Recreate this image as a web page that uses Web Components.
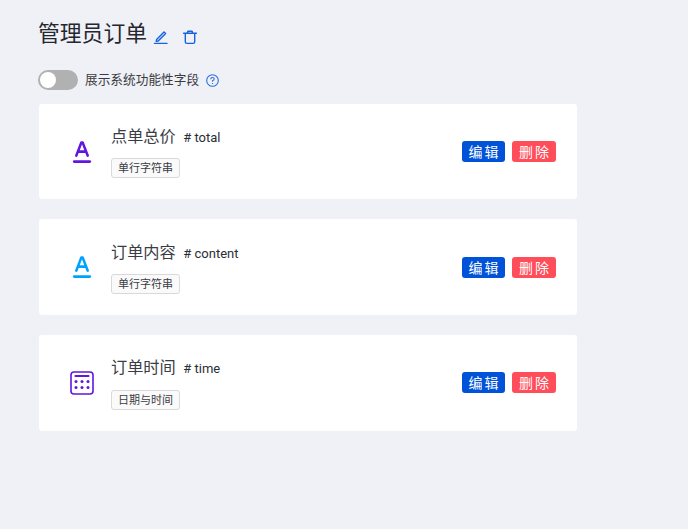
<!DOCTYPE html>
<html lang="zh"><head><meta charset="utf-8"><style>
html,body{margin:0;padding:0;background:#f0f1f6;height:100%}
body{font-family:"Noto Sans","Noto Sans CJK SC",sans-serif;color:#25272e}
</style></head><body>
<template id="app-tpl"><style>
:host{display:block;box-sizing:border-box;width:688px;height:529px;padding:17px 0 0 38px;overflow:hidden}
.list{display:flex;flex-direction:column;gap:20px;margin-left:1px;width:538px}
</style><page-header></page-header><sys-toggle></sys-toggle><div class="list"><slot></slot></div></template>

<template id="hdr-tpl"><style>
:host{display:flex;align-items:center;height:30px}
h1{margin:0;padding-top:2px;font-weight:400;font-size:21.8px;line-height:28px;color:#25272e}
svg{display:block;width:16px;height:16px;fill:none;stroke:#1463e0;stroke-width:1.4;stroke-linecap:round;stroke-linejoin:round}
.e{margin:9px 0 0 6px}.d{margin:9px 0 0 13px}
</style><h1>管理员订单</h1>
<svg class="e" viewBox="0 0 16 16"><path d="M3.6 10.4 L3.2 12.4 L5.2 12 L12.6 4.6 L11 3 Z M1.5 14.4 H14"/></svg>
<svg class="d" viewBox="0 0 16 16"><path d="M3.3 4.4 V12.8 Q3.3 14.4 4.9 14.4 H11.1 Q12.7 14.4 12.7 12.8 V4.4 M1.6 4.2 H14.4 M5.4 4 L5.9 2.2 H10.1 L10.6 4"/></svg></template>

<template id="tog-tpl"><style>
:host{display:flex;align-items:center;height:20px;margin:23px 0 13.8px}
.sw{width:40px;height:20px;border-radius:10px;background:#b1b1b1;position:relative;flex:none}
.sw i{position:absolute;left:2px;top:2px;width:16px;height:16px;border-radius:50%;background:#fff}
span{font-size:12.7px;margin:-2px 0 0 7px;color:#3a3c44;line-height:20px}
svg{width:13px;height:13px;margin-left:7px;display:block;fill:none;stroke:#2a70e0;stroke-width:1.1}
</style><div class="sw"><i></i></div><span>展示系统功能性字段</span>
<svg viewBox="0 0 13 13"><circle cx="6.5" cy="6.5" r="5.8"/><path d="M4.8 5.2 Q4.8 3.5 6.5 3.5 Q8.2 3.5 8.2 5 Q8.2 6 6.5 6.8 V7.8 M6.5 9 V10"/></svg></template>

<template id="card-tpl"><style>
:host{display:flex;align-items:center;box-sizing:border-box;background:#fff;border-radius:3px;height:95.6px;padding-left:30px;padding-right:21px}
.icon{width:26px;height:26px;flex:none;display:flex}
.main{margin-left:16px;flex:1;display:flex;flex-direction:column;align-items:flex-start}
.t{display:flex;align-items:baseline;height:24px;line-height:24px;transform:translateY(-1px)}
.n{font-size:16.2px;color:#3b3d45}
.k{font-family:Roboto,"Noto Sans",sans-serif;font-size:13px;margin-left:7.5px;color:#2b2d35}
.tag{margin-top:var(--tag-gap,9.1px);box-sizing:border-box;height:20px;line-height:18px;padding:0 6px;border:1px solid #d9d9d9;border-radius:3px;font-size:11px;background:#fafafa;color:#3a3c44}
.b{height:21.2px;width:43px;box-sizing:border-box;border-radius:3px;color:#fff;font-size:14px;line-height:21px;text-align:center;letter-spacing:2px;text-indent:2px}
.edit{background:#0052d9}.del{background:#ff4d5a;margin-left:7px;width:44px}
</style><div class="icon"><slot name="icon"></slot></div>
<div class="main"><div class="t"><span class="n"><slot name="name"></slot></span><span class="k"><slot name="key"></slot></span></div><div class="tag"><slot name="type"></slot></div></div>
<div class="b edit">编辑</div><div class="b del">删除</div></template>

<admin-app>
<field-card>
<svg slot="icon" width="26" height="26" viewBox="0 0 26 26" fill="none" stroke="#6116de" stroke-width="2.6" stroke-linecap="round" stroke-linejoin="round"><path d="M7.3 16.6 L12.3 3.6 H13.7 L18.7 16.6 M9.2 12.6 H16.8"/><path d="M5.2 22.6 H20.8"/></svg>
<span slot="name">点单总价</span><span slot="key"># total</span><span slot="type">单行字符串</span></field-card>
<field-card>
<svg slot="icon" width="26" height="26" viewBox="0 0 26 26" fill="none" stroke="#00a2ff" stroke-width="2.6" stroke-linecap="round" stroke-linejoin="round"><path d="M7.3 16.6 L12.3 3.6 H13.7 L18.7 16.6 M9.2 12.6 H16.8"/><path d="M5.2 22.6 H20.8"/></svg>
<span slot="name">订单内容</span><span slot="key"># content</span><span slot="type">单行字符串</span></field-card>
<field-card style="--tag-gap:10px">
<svg slot="icon" width="26" height="26" viewBox="0 0 26 26" fill="none" stroke="#6116de"><rect x="2" y="2" width="22" height="22" rx="3" stroke-width="1.6"/><path d="M6.5 6 H19.5" stroke-width="2.2" stroke-linecap="round"/><g fill="#6116de" stroke="none"><circle cx="7" cy="11.5" r="1.5"/><circle cx="13" cy="11.5" r="1.5"/><circle cx="19" cy="11.5" r="1.5"/><circle cx="7" cy="17.5" r="1.5"/><circle cx="13" cy="17.5" r="1.5"/><circle cx="19" cy="17.5" r="1.5"/></g></svg>
<span slot="name">订单时间</span><span slot="key"># time</span><span slot="type">日期与时间</span></field-card>
</admin-app>
<script>
const def=(n,t)=>customElements.define(n,class extends HTMLElement{constructor(){super();this.attachShadow({mode:"open"}).appendChild(document.getElementById(t).content.cloneNode(true))}});
def("page-header","hdr-tpl");def("sys-toggle","tog-tpl");def("field-card","card-tpl");def("admin-app","app-tpl");
</script></body></html>
